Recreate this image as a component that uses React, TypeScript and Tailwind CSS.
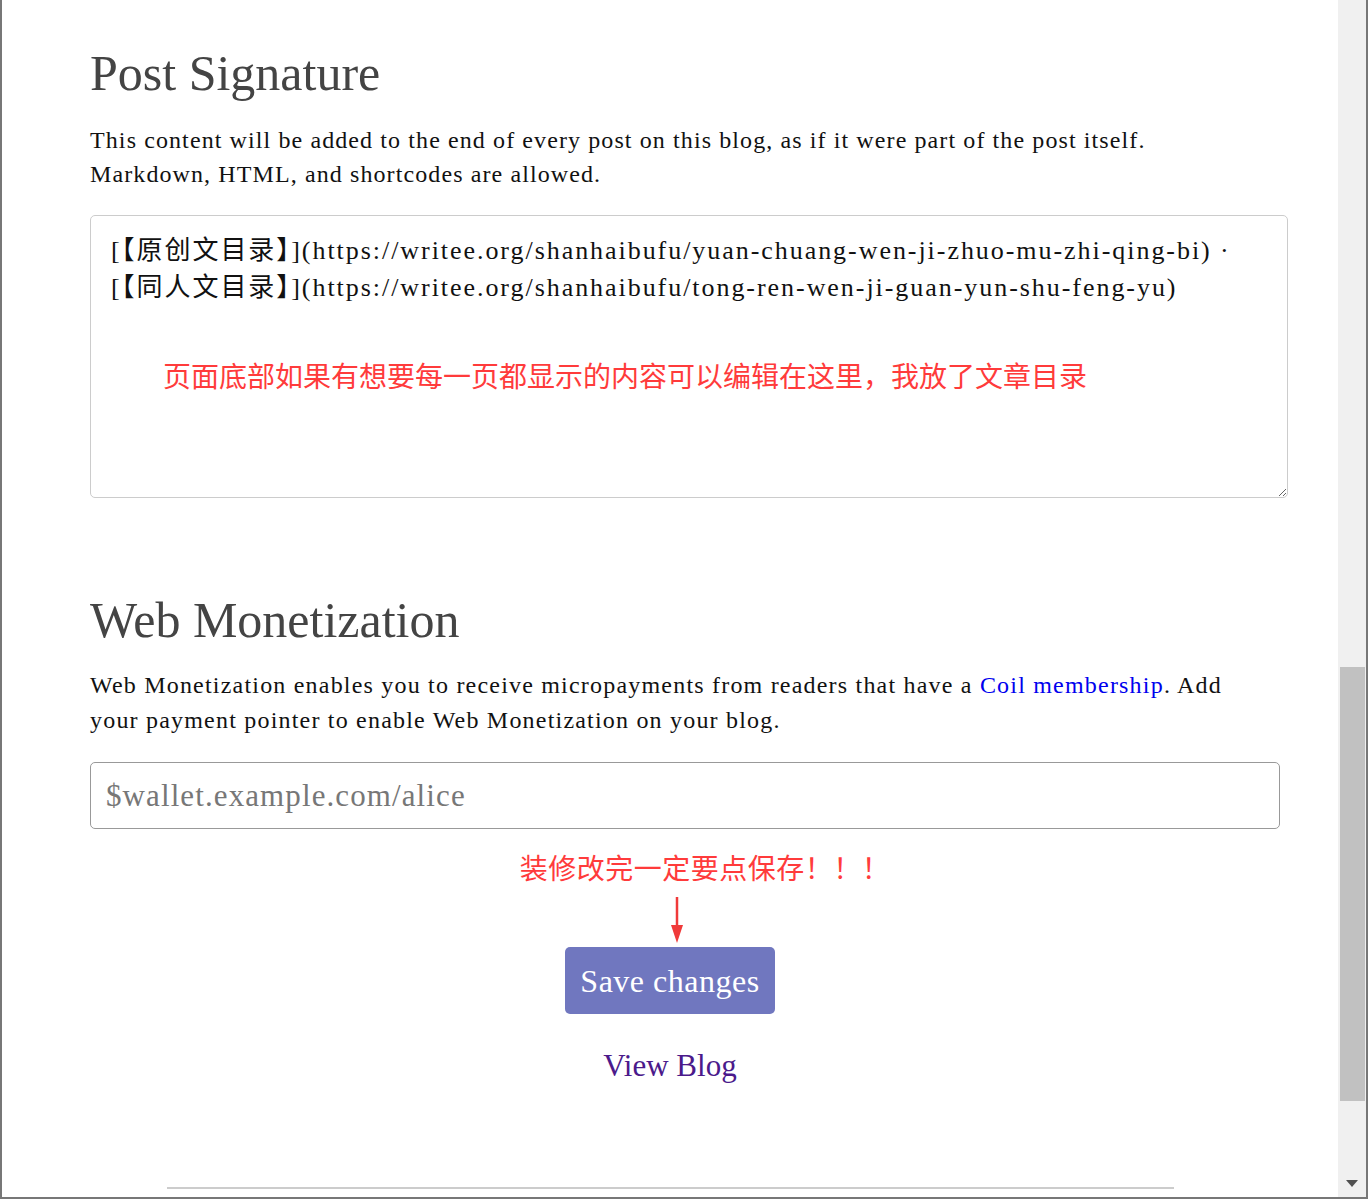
import React from "react";

const serif = "font-['Liberation_Serif','Noto_Sans_CJK_SC',serif]";
const cjk = "font-['Noto_Sans_CJK_SC','Noto_Sans',sans-serif]";

const signature =
  "[【原创文目录】](https://writee.org/shanhaibufu/yuan-chuang-wen-ji-zhuo-mu-zhi-qing-bi) ·\n[【同人文目录】](https://writee.org/shanhaibufu/tong-ren-wen-ji-guan-yun-shu-feng-yu)";

export default function App() {
  return (
    <div className="w-[1368px] h-[1199px] flex flex-col bg-white overflow-hidden">
      <div className="flex flex-1 min-h-0">
        {/* page */}
        <div className={`flex-1 border-l-2 border-[#777] ${serif}`}>
          <div className="pl-[88px] pr-[48px]">
            <h2 className="mt-[44px] text-[50px] leading-[58px] text-[#444]">Post Signature</h2>
            <p className="mt-[21px] text-[24px] leading-[34px] tracking-[1.1px] text-[#111]">
              This content will be added to the end of every post on this blog, as if it were part of the post itself.
              <br />
              Markdown, HTML, and shortcodes are allowed.
            </p>

            <div className="relative mt-[24px]">
              <textarea
                readOnly
                defaultValue={signature}
                className={`block w-[1198px] h-[283px] border border-[#ccc] rounded-[5px] pt-[16px] px-[20px] text-[26px] leading-[37px] tracking-[1.95px] text-[#111] outline-none resize-y ${serif}`}
              />
              <div className={`absolute left-[73px] top-[140px] text-[28px] leading-[40px] text-[#ff3b3b] pointer-events-none ${cjk}`}>
                页面底部如果有想要每一页都显示的内容可以编辑在这里，我放了文章目录
              </div>
            </div>

            <h2 className="mt-[93px] text-[50px] leading-[58px] text-[#444]">Web Monetization</h2>
            <p className="mt-[19px] text-[24px] leading-[35px] tracking-[1.2px] text-[#111]">
              Web Monetization enables you to receive micropayments from readers that have a{" "}
              <a className="text-[#0000ee]">Coil membership</a>. Add
              <br />
              your payment pointer to enable Web Monetization on your blog.
            </p>

            <input
              placeholder="$wallet.example.com/alice"
              className={`block mt-[24px] w-[1190px] h-[67px] border border-[#999] rounded-[5px] px-[15px] text-[31px] tracking-[1.1px] placeholder:text-[#777] outline-none ${serif}`}
            />
          </div>

          <div className="flex flex-col items-center">
            <div className={`mt-[18px] ml-[70px] text-[28px] leading-[40px] tracking-[0.5px] text-[#ff3b3b] ${cjk}`}>装修改完一定要点保存！！！</div>
            <svg width="14" height="46" viewBox="0 0 14 46" className="mt-[10px] ml-[14px]">
              <line x1="7" y1="0" x2="7" y2="30" stroke="#f03a3a" strokeWidth="2.5" />
              <path d="M1 28 L13 28 L7 46 Z" fill="#f03a3a" />
            </svg>
            <button className="mt-[4px] w-[210px] h-[67px] rounded-[5px] bg-[#7077bf] text-white text-[32px] tracking-[0.5px]">
              Save changes
            </button>
            <a className="mt-[32px] text-[31px] leading-[40px] text-[#4b1a8b]">View Blog</a>
            <div className="mt-[101px] w-[1007px] h-[2px] bg-[#ccc]" />
          </div>
        </div>

        {/* scrollbar */}
        <div className="w-[28px] bg-[#f0f0f0] relative">
          <div className="absolute left-[2px] top-[667px] w-[25px] h-[434px] bg-[#c1c1c1]" />
          <div className="absolute left-[8px] top-[1180px] w-0 h-0 border-l-[6px] border-r-[6px] border-t-[7px] border-l-transparent border-r-transparent border-t-[#505050]" />
        </div>
        <div className="w-[2px] bg-[#777]" />
      </div>
      <div className="h-[2px] bg-[#777]" />
    </div>
  );
}
